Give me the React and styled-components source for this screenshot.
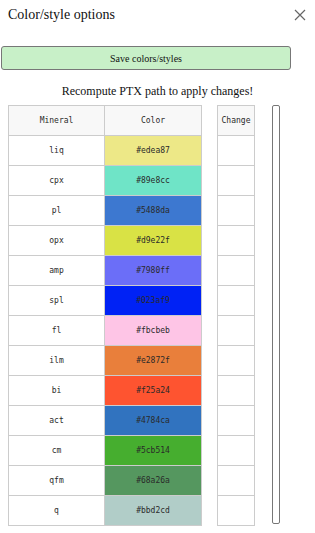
import React from 'react';
import styled, { createGlobalStyle } from 'styled-components';

const GlobalStyle = createGlobalStyle`
  html, body {
    margin: 0;
    padding: 0;
    background: #fff;
  }
  body {
    font-family: "Liberation Serif", "Times New Roman", serif;
  }
`;

const minerals = [
  { name: 'liq', hex: '#edea87', shown: '#ede887' },
  { name: 'cpx', hex: '#89e8cc', shown: '#6fe4c7' },
  { name: 'pl', hex: '#5488da', shown: '#3d78d0' },
  { name: 'opx', hex: '#d9e22f', shown: '#d9e245' },
  { name: 'amp', hex: '#7980ff', shown: '#6b6ef8' },
  { name: 'spl', hex: '#023af9', shown: '#0022f5' },
  { name: 'fl', hex: '#fbcbeb', shown: '#fec5e6' },
  { name: 'ilm', hex: '#e2872f', shown: '#e97f3b' },
  { name: 'bi', hex: '#f25a24', shown: '#fe5430' },
  { name: 'act', hex: '#4784ca', shown: '#3173bf' },
  { name: 'cm', hex: '#5cb514', shown: '#46ae2f' },
  { name: 'qfm', hex: '#68a26a', shown: '#55975f' },
  { name: 'q', hex: '#bbd2cd', shown: '#b1cdc8' },
];

const Panel = styled.div`
  width: 315px;
  height: 533px;
  display: flex;
  flex-direction: column;
`;

const Header = styled.div`
  display: flex;
  justify-content: space-between;
  align-items: center;
  height: 30px;
  padding: 0 8px 0 8px;
`;

const Title = styled.h2`
  margin: 0;
  font-size: 14px;
  font-weight: normal;
  color: #111;
`;

const CloseButton = styled.button`
  border: none;
  background: none;
  padding: 0;
  width: 14px;
  height: 14px;
  display: flex;
  align-items: center;
  justify-content: center;
  cursor: pointer;
`;

const SaveButton = styled.button`
  margin: 16px 0 0 1px;
  width: 290px;
  height: 24px;
  background: #c8f0c8;
  border: 1.5px solid #777;
  border-radius: 3px;
  font-family: "Liberation Serif", "Times New Roman", serif;
  font-size: 10px;
  color: #111;
  padding: 0;
`;

const Notice = styled.p`
  margin: 0;
  height: 35px;
  line-height: 43px;
  text-align: center;
  font-size: 12px;
  color: #111;
`;

const Tables = styled.div`
  display: flex;
  align-items: flex-start;
  padding-left: 8px;
`;

const Table = styled.table`
  border-collapse: collapse;
  font-family: "DejaVu Sans Mono", monospace;
  font-size: 8px;
  color: #2a2a2a;
`;

const Head = styled.th`
  border: 1px solid #ccc;
  background: #f8f8f8;
  font-weight: normal;
  height: 29px;
  width: ${({ w }) => w}px;
  padding: 0;
  text-align: center;
`;

const Cell = styled.td`
  border: 1px solid #ccc;
  height: 29px;
  padding: 0;
  text-align: center;
  background: ${({ bg }) => bg || '#fff'};
`;

const ChangeTable = styled(Table)`
  margin-left: 15px;
`;

const Slider = styled.div`
  margin: 0 0 0 17px;
  width: 6px;
  height: 417px;
  border: 1.5px solid #777;
  border-radius: 2px;
`;

export default function App() {
  return (
    <Panel>
      <GlobalStyle />
      <Header>
        <Title>Color/style options</Title>
        <CloseButton aria-label="close">
          <svg width="12" height="12" viewBox="0 0 12 12">
            <path d="M1 1 L11 11 M11 1 L1 11" stroke="#666" strokeWidth="1.2" />
          </svg>
        </CloseButton>
      </Header>
      <SaveButton>Save colors/styles</SaveButton>
      <Notice>Recompute PTX path to apply changes!</Notice>
      <Tables>
        <Table>
          <thead>
            <tr>
              <Head w={95}>Mineral</Head>
              <Head w={96}>Color</Head>
            </tr>
          </thead>
          <tbody>
            {minerals.map((m) => (
              <tr key={m.name}>
                <Cell>{m.name}</Cell>
                <Cell bg={m.shown}>{m.hex}</Cell>
              </tr>
            ))}
          </tbody>
        </Table>
        <ChangeTable>
          <thead>
            <tr>
              <Head w={36}>Change</Head>
            </tr>
          </thead>
          <tbody>
            {minerals.map((m) => (
              <tr key={m.name}>
                <Cell />
              </tr>
            ))}
          </tbody>
        </ChangeTable>
        <Slider />
      </Tables>
    </Panel>
  );
}
